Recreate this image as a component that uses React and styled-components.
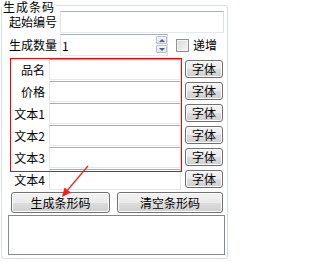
import styled, { createGlobalStyle } from 'styled-components';

const GlobalStyle = createGlobalStyle`
  html, body {
    margin: 0;
    padding: 0;
    background: #fff;
  }
  body {
    font-family: "Noto Sans CJK SC", "Noto Sans", sans-serif;
    font-size: 12px;
    color: #000;
  }
`;

const Page = styled.div`
  position: relative;
  width: 233px;
  height: 262px;
  padding: 5px 0 0 1px;
  box-sizing: border-box;
`;

const GroupBox = styled.div`
  position: relative;
  box-sizing: border-box;
  width: 227px;
  height: 254px;
  border: 1px solid #d5dfe5;
  border-radius: 3px;
  padding-top: 5px;
  display: flex;
  flex-direction: column;
`;

const Legend = styled.span`
  position: absolute;
  left: 0;
  top: -5px;
  padding: 0 1px 0 1px;
  background: #fff;
  font-size: 12px;
  letter-spacing: 1px;
  line-height: 12px;
`;

const Row = styled.div`
  display: flex;
  align-items: ${p => (p.$top ? 'flex-start' : 'center')};
  height: ${p => p.$h}px;
  margin-top: ${p => p.$mt || 0}px;
  padding-left: ${p => p.$pl || 0}px;
`;

const Label = styled.label`
  box-sizing: border-box;
  flex: none;
  width: ${p => p.$w}px;
  padding: ${p => (p.$right ? '0 4px 0 0' : '0 0 0 7px')};
  text-align: ${p => (p.$right ? 'right' : 'left')};
  line-height: 14px;
  align-self: center;
`;

const TextBox = styled.input`
  box-sizing: border-box;
  flex: none;
  width: ${p => p.$w}px;
  height: ${p => p.$h}px;
  margin: 0;
  padding: 0 0 0 1px;
  background: #fff;
  border: 1px solid;
  border-color: #abadb3 #dbdfe6 #e3e9ef #e2e3ea;
  border-radius: 0;
  font: inherit;
  line-height: 14px;
  color: #000;
  outline: none;
`;

const SpinWrap = styled.div`
  position: relative;
  flex: none;
  display: flex;
`;

const SpinButtons = styled.div`
  position: absolute;
  right: 1px;
  top: 2px;
  display: flex;
  flex-direction: column;
  gap: 1px;
`;

const SpinHalf = styled.span`
  box-sizing: border-box;
  width: 11px;
  height: 8px;
  border: 1px solid #b7c0cc;
  border-radius: 1px;
  background: linear-gradient(#f4f6f9, #dfe4ec);
  display: flex;
  align-items: center;
  justify-content: center;

  &::after {
    content: '';
    border-left: 3px solid transparent;
    border-right: 3px solid transparent;
    ${p =>
      p.$down
        ? 'border-top: 3px solid #4c6083;'
        : 'border-bottom: 3px solid #4c6083;'}
  }
`;

const CheckBox = styled.span`
  box-sizing: border-box;
  flex: none;
  width: 13px;
  height: 13px;
  margin-left: 8px;
  border: 1px solid #8e8f8f;
  background: linear-gradient(135deg, #d9d9d9, #f6f6f6);
  box-shadow: inset 0 0 0 1px #f4f4f4;
`;

const CheckText = styled.span`
  margin-left: 4px;
  line-height: 14px;
`;

const Button = styled.button`
  box-sizing: border-box;
  flex: none;
  width: ${p => p.$w}px;
  height: ${p => p.$h}px;
  margin: ${p => p.$m || 0};
  padding: 0;
  border: 1px solid #707070;
  border-radius: 3px;
  background: linear-gradient(#f2f2f2 0%, #ebebeb 50%, #dddddd 50%, #cfcfcf 100%);
  box-shadow: inset 0 0 0 1px #fcfcfc;
  font: inherit;
  line-height: 14px;
  color: #000;
  text-align: center;
`;

const Memo = styled.textarea`
  box-sizing: border-box;
  width: 217px;
  height: 40px;
  margin: 2px 0 0 6px;
  padding: 0;
  border: 1px solid #828790;
  resize: none;
  font: inherit;
  outline: none;
`;

const RedFrame = styled.div`
  position: absolute;
  left: 10px;
  top: 58px;
  width: 172px;
  height: 114px;
  box-sizing: border-box;
  border: 1px solid #ff0000;
  pointer-events: none;
`;

const Arrow = styled.svg`
  position: absolute;
  left: 60px;
  top: 164px;
  pointer-events: none;
`;

const fontRows = ['品名', '价格', '文本1', '文本2', '文本3', '文本4'];

export default function App() {
  return (
    <>
      <GlobalStyle />
      <Page>
        <GroupBox>
          <Legend>生成条码</Legend>

          <Row $h={22}>
            <Label $w={58}>起始编号</Label>
            <TextBox $w={164} $h={22} defaultValue="" />
          </Row>

          <Row $h={22} $mt={1}>
            <Label $w={58}>生成数量</Label>
            <SpinWrap>
              <TextBox $w={108} $h={22} defaultValue="1" />
              <SpinButtons>
                <SpinHalf />
                <SpinHalf $down />
              </SpinButtons>
            </SpinWrap>
            <CheckBox />
            <CheckText>递增</CheckText>
          </Row>

          {fontRows.map((name, i) => (
            <Row key={name} $h={21} $mt={i === 0 ? 3 : 1} $top>
              <Label $w={47} $right>{name}</Label>
              <TextBox $w={132} $h={21} defaultValue="" />
              <Button $w={38} $h={18} $m="1px 0 0 4px">字体</Button>
            </Row>
          ))}

          <Row $h={21} $mt={2} $pl={9}>
            <Button $w={99} $h={21}>生成条形码</Button>
            <Button $w={106} $h={21} $m="0 0 0 7px">清空条形码</Button>
          </Row>

          <Memo />
        </GroupBox>

        <RedFrame />
        <Arrow width="32" height="36" viewBox="0 0 32 36">
          <line x1="28" y1="2" x2="7.6" y2="26" stroke="#ff1a1a" strokeWidth="1.2" />
          <polygon points="2,33 10.8,28.5 4.5,23.5" fill="#ff1a1a" />
        </Arrow>
      </Page>
    </>
  );
}
